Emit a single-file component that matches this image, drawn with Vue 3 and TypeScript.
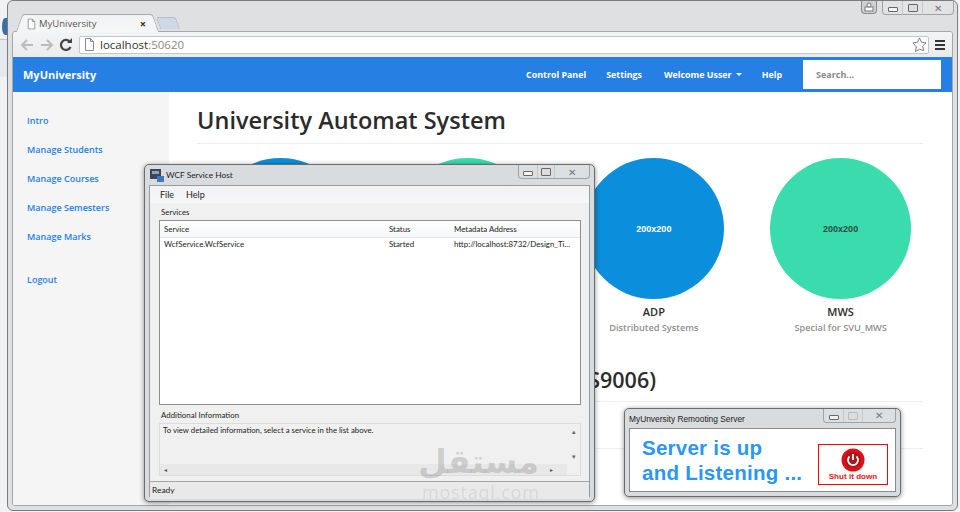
<script setup lang="ts">
const navItems = ['Intro', 'Manage Students', 'Manage Courses', 'Manage Semesters', 'Manage Marks']
const cards = [
  { title: '', sub: '', color: '#0b8edb', label: '' },
  { title: '', sub: '', color: '#3adbac', label: '' },
  { title: 'ADP', sub: 'Distributed Systems', color: '#0b8edb', label: '200x200', light: true },
  { title: 'MWS', sub: 'Special for SVU_MWS', color: '#3adbac', label: '200x200', light: false },
]
</script>

<template>
  <div class="desktop">
    <div class="globe"></div>
    <div class="edge-left"></div>
    <section class="browser">
      <div class="win-top">
        <div class="tab">
          <svg width="9" height="12" viewBox="0 0 11 13"><path d="M1.500.5h5l3 3v9h-8z M6.500.5v3h3" fill="#fff" stroke="#8a8a8a"/></svg>
          <span class="tab-title">MyUniversity</span>
          <span class="tab-x">×</span>
        </div>
        <div class="new-tab"></div>
        <div class="caption-lock"><svg width="12" height="10" viewBox="0 0 12 10"><rect x="2" y="5" width="8" height="4" fill="#fff" stroke="#777"/><circle cx="6" cy="3" r="2" fill="#fff" stroke="#777"/></svg></div>
        <div class="caption cap-browser">
          <span><i class="min"></i></span><span><i class="max"></i></span><span class="cx">✕</span>
        </div>
      </div>
      <div class="inner">
        <div class="toolbar">
          <svg class="nav-ic" width="16" height="14" viewBox="0 0 16 14"><path d="M14 7H3M8 2 3 7l5 5" fill="none" stroke="#bcbcbc" stroke-width="2"/></svg>
          <svg class="nav-ic" width="16" height="14" viewBox="0 0 16 14"><path d="M2 7h11M8 2l5 5-5 5" fill="none" stroke="#bcbcbc" stroke-width="2"/></svg>
          <svg class="nav-ic" width="14" height="14" viewBox="0 0 14 14"><path d="M11.500 9A5 5 0 1 1 11 4" fill="none" stroke="#444" stroke-width="2.200"/><path d="M8 5h5V0z" fill="#444"/></svg>
          <div class="omnibox">
            <svg width="11" height="13" viewBox="0 0 11 13"><path d="M1.500.5h5l3 3v9h-8z M6.500.5v3h3" fill="#fff" stroke="#8a8a8a"/></svg>
            <span class="url"><b>localhost</b>:50620</span>
            <svg class="star" width="15" height="15" viewBox="0 0 16 16"><path d="m8 1 2.100 4.600 4.900.6-3.600 3.400 1 4.900L8 13.100l-4.400 2.400 1-4.900L1 6.200l4.900-.6z" fill="#fff" stroke="#777"/></svg>
          </div>
          <div class="menu"><i></i><i></i><i></i></div>
        </div>
        <header class="navbar">
          <span class="brand">MyUniversity</span>
          <nav class="topnav">
            <a>Control Panel</a><a>Settings</a><a>Welcome Usser <i class="caret"></i></a><a>Help</a>
          </nav>
          <div class="search">Search...</div>
        </header>
        <div class="page">
          <aside class="sidebar">
            <a v-for="n in navItems" :key="n">{{ n }}</a>
            <a class="logout">Logout</a>
          </aside>
          <main class="main">
            <h1>University Automat System</h1>
            <div class="cards">
              <div v-for="(c, i) in cards" :key="i" class="card">
                <div class="circle" :style="{ background: c.color }">
                  <span :class="{ light: c.light }">{{ c.label }}</span>
                </div>
                <h4>{{ c.title }}</h4>
                <p>{{ c.sub }}</p>
              </div>
            </div>
            <h2>(S9006)</h2>
            <div class="rule2"></div>
            <div class="rule3"></div>
          </main>
        </div>
      </div>
    </section>

    <section class="wcf">
      <div class="titlebar">
        <svg width="14" height="13" viewBox="0 0 14 13"><rect x="0" y="0" width="11" height="10" fill="#3a4658"/><rect x="2" y="2" width="7" height="3" fill="#8fa4c0"/><rect x="7" y="7" width="7" height="6" fill="#3f78c0"/></svg>
        <span>WCF Service Host</span>
        <div class="caption cap-wcf">
          <span><i class="min"></i></span><span><i class="max"></i></span><span class="cx">✕</span>
        </div>
      </div>
      <div class="wcf-body">
        <div class="menubar"><span>File</span><span>Help</span></div>
        <div class="lbl services">Services</div>
        <div class="list">
          <div class="row head"><span class="c1">Service</span><span class="c2">Status</span><span class="c3">Metadata Address</span></div>
          <div class="row"><span class="c1">WcfService.WcfService</span><span class="c2">Started</span><span class="c3">http://localhost:8732/Design_Ti...</span></div>
        </div>
        <div class="lbl info">Additional Information</div>
        <div class="details">
          <div class="d-main">
            <div class="d-text">To view detailed information, select a service in the list above.</div>
            <div class="hbar"><i>◂</i><i>▸</i></div>
          </div>
          <div class="vbar"><i>▴</i><i>▾</i></div>
        </div>
        <div class="status">Ready</div>
      </div>
      <div class="watermark">
        <div class="wm-ar" lang="ar" dir="rtl">مستقل</div>
        <div class="wm-en">mostaql.com</div>
      </div>
    </section>

    <section class="remote">
      <div class="r-title">
        <span>MyUnversity Remooting Server</span>
        <div class="caption cap-remote">
          <span><i class="min"></i></span><span><i class="max dim"></i></span><span class="cx">✕</span>
        </div>
      </div>
      <div class="r-body">
        <div class="r-msg">Server is up<br />and Listening ...</div>
        <button class="shut">
          <svg width="24" height="24" viewBox="0 0 24 24"><circle cx="12" cy="12" r="11.500" fill="#e00e16"/><circle cx="12" cy="12" r="8" fill="#a61a1c"/><path d="M8.500 8.500a5 5 0 1 0 7 0" fill="none" stroke="#fff" stroke-width="1.800"/><path d="M12 6v6" stroke="#fff" stroke-width="1.800"/></svg>
          <span>Shut it down</span>
        </button>
      </div>
    </section>
  </div>
</template>

<style scoped>
.desktop { position: relative; width: 960px; height: 512px; overflow: hidden; background: #f1f2f4; font-family: "Noto Sans", sans-serif; }
.globe { position: absolute; left: 2px; top: 18px; width: 6px; height: 17px; background: #3a6ea5; border-radius: 50% 0 0 50%; }
.edge-left { position: absolute; left: 0; top: 39px; width: 8px; height: 37px; background: #e4e9f0; border-top: 1px solid #c3c3c3; }
.browser { position: absolute; left: 7px; top: 0; width: 951px; height: 511px; background: #dfe0e2; border: 1px solid #7c7c7c; border-radius: 6px; padding: 0 4px 4px; box-sizing: border-box; display: flex; flex-direction: column; }
.win-top { height: 30px; flex: none; display: flex; align-items: flex-end; position: relative; padding-left: 13px; }
.tab { position: relative; z-index: 1; width: 125px; height: 18px; margin-bottom: -1px; background: linear-gradient(#f1f2f3, #f6f7f7); border-top: 1px solid #a8a9ab; border-radius: 4px 4px 0 0; display: flex; align-items: center; gap: 3px; padding: 0 4px 0 2px; box-sizing: border-box; font-size: 9.500px; color: #555; }
.tab::before, .tab::after { content: ""; position: absolute; top: -1px; bottom: 0; width: 12px; background: #f3f4f5; border-top: 1px solid #a8a9ab; }
.tab::before { left: -6px; transform: skewX(-20deg); border-left: 1px solid #a8a9ab; border-radius: 3px 0 0 0; z-index: -1; }
.tab::after { right: -6px; transform: skewX(20deg); border-right: 1px solid #a8a9ab; border-radius: 0 3px 0 0; z-index: -1; }
.tab-title { flex: 1; font-family: "Open Sans", sans-serif; font-size: 9.500px; }
.tab-x { font-weight: 700; font-size: 11px; color: #333; }
.new-tab { width: 18px; height: 11px; margin: 0 0 2px 8px; background: #cfd8e6; border: 1px solid #b9bcc2; border-bottom: 0; border-radius: 3px 3px 0 0; transform: skewX(20deg); }
.caption-lock { position: absolute; left: 849px; top: 0; width: 16px; height: 13px; background: #cfd0d2; border: 1px solid #8a8a8a; border-top: 0; border-radius: 0 0 4px 4px; display: flex; align-items: center; justify-content: center; box-sizing: border-box; }
.caption { position: absolute; display: grid; top: 0; height: 14px; background: #e2e3e5; border: 1px solid #a2a2a2; border-top: 0; border-radius: 0 0 4px 4px; box-sizing: border-box; }
.cap-browser { left: 870px; width: 72px; grid-template-columns: 20px 20px 1fr; }
.cap-wcf { left: 369px; width: 72px; grid-template-columns: 19px 17px 1fr; background: #dcdfe2; }
.cap-remote { left: 194px; width: 73px; grid-template-columns: 20px 19px 1fr; background: #dcdfe2; }
.caption > span { display: flex; align-items: center; justify-content: center; border-right: 1px solid #c6c7c9; font-size: 10px; color: #777; }
.caption > .cx { border-right: 0; }
.min { display: block; width: 8px; height: 3px; border: 1px solid #666; background: #f3f3f3; border-radius: 1px; margin-top: 3px; }
.max { display: block; width: 8px; height: 6px; border: 1px solid #666; background: #ddd; border-radius: 1px; }
.max.dim { border-color: #bbb; }
.inner { flex: 1; min-height: 0; display: flex; flex-direction: column; border: 1px solid #a6a7a9; border-radius: 3px; overflow: hidden; }
.toolbar { height: 25px; flex: none; background: linear-gradient(#f3f4f5, #ebebec); display: flex; align-items: center; gap: 4px; padding-left: 6px; box-sizing: border-box; }
.nav-ic { flex: none; }
.omnibox { margin-left: 2px; width: 850px; height: 18px; background: #fff; border: 1px solid #c4c5c7; border-radius: 2px; display: flex; align-items: center; gap: 5px; padding: 0 1px 0 4px; box-sizing: border-box; }
.url { flex: 1; font-family: "Open Sans", sans-serif; font-size: 11.500px; color: #888; }
.url b { font-weight: 400; color: #333; }
.menu { width: 10px; margin-left: 2px; display: flex; flex-direction: column; gap: 2px; }
.menu i { display: block; height: 2px; background: #333; }
.navbar { height: 35px; flex: none; background: #267fe3; display: flex; align-items: center; color: #fff; font-family: "Open Sans", sans-serif; font-weight: 700; }
.brand { margin-left: 10px; font-size: 11px; }
.topnav { margin-left: auto; display: flex; gap: 20px; font-size: 8.900px; }
.topnav a { display: flex; align-items: center; gap: 4px; }
.topnav a:nth-child(3) { margin-left: 2px; }
.caret { width: 0; height: 0; border: 3px solid transparent; border-top-color: #fff; border-bottom: 0; }
.search { width: 138px; height: 29px; margin: 0 11px 0 21px; background: #fff; color: #888; font-size: 9px; display: flex; align-items: center; padding-left: 13px; box-sizing: border-box; }
.page { flex: 1; display: flex; min-height: 0; background: #fff; }
.sidebar { width: 156px; flex: none; background: #f5f5f5; box-sizing: border-box; padding: 23px 0 0 14px; display: flex; flex-direction: column; font-family: "Open Sans", sans-serif; font-weight: 600; font-size: 9px; color: #267fe3; }
.sidebar a { height: 29px; line-height: 12px; flex: none; }
.sidebar .logout { margin-top: 14px; }
.main { flex: 1; padding: 0 29px 0 28px; min-width: 0; }
h1 { margin: 0; height: 51px; line-height: 56px; font-family: "Open Sans", sans-serif; font-weight: 600; font-size: 23.500px; color: #2b2b2b; border-bottom: 1px solid #eee; }
.cards { display: grid; grid-template-columns: repeat(4, 1fr); margin: 14px -11px 0 -10px; }
.card { text-align: center; display: flex; flex-direction: column; align-items: center; }
.circle { width: 141px; height: 141px; border-radius: 50%; display: flex; align-items: center; justify-content: center; font-size: 9px; font-weight: 700; font-family: "Liberation Sans", sans-serif; color: #2b4a44; }
.circle .light { color: #fff; }
.card h4 { margin: 6px 0 0; height: 14px; line-height: 14px; font-size: 11px; font-weight: 600; color: #2b2b2b; font-family: "Open Sans", sans-serif; }
.card p { margin: 3px 0 0; height: 12px; line-height: 12px; font-size: 9.200px; font-weight: 600; color: #8f8f8f; font-family: "Open Sans", sans-serif; }
h2 { margin: 32px 0 0; font-family: "Open Sans", sans-serif; font-size: 21.500px; font-weight: 600; line-height: 28px; color: #2b2b2b; text-align: right; padding-right: 267px; }
.rule2 { height: 1px; background: #eee; margin-top: 7px; }
.rule3 { height: 1px; background: #eee; margin-top: 46px; }

.wcf { position: absolute; left: 144px; top: 164px; width: 451px; height: 338px; box-sizing: border-box; background: #d9dcdf; border: 1px solid #6c6c6c; border-radius: 5px; box-shadow: 0 1px 5px rgba(0,0,0,.45); padding: 0 4px 4px; display: flex; flex-direction: column; font-family: Lato, sans-serif; color: #222; }
.titlebar { height: 20px; flex: none; display: flex; align-items: center; gap: 2px; padding-left: 1px; font-size: 8.300px; position: relative; }
.wcf-body { flex: 1; background: #f0f0f0; border: 1px solid #9a9a9a; display: flex; flex-direction: column; min-height: 0; font-size: 7.900px; }
.menubar { height: 17px; flex: none; display: flex; gap: 12px; align-items: center; padding-left: 10px; background: linear-gradient(#f1f2f4, #f7f7f8); font-size: 9px; }
.lbl { padding-left: 11px; height: 12px; line-height: 12px; flex: none; }
.services { margin-top: 3px; }
.list { margin: 2px 8px 0 9px; height: 185px; flex: none; background: #fff; border: 1px solid #8f8f8f; box-sizing: border-box; }
.row { display: flex; height: 12px; align-items: center; padding-left: 4px; }
.row.head { height: 17px; box-sizing: border-box; background: linear-gradient(#fff, #f6f7f8); border-bottom: 1px solid #e4e5e7; }
.c1 { width: 225px; flex: none; }
.c2 { width: 65px; flex: none; }
.c3 { flex: 1; min-width: 0; white-space: nowrap; }
.info { margin-top: 4px; }
.details { margin: 2px 8px 0 9px; height: 53px; flex: none; display: flex; border: 1px solid #dcdcdc; background: #f0f0f0; box-sizing: border-box; }
.d-main { flex: 1; display: flex; flex-direction: column; }
.d-text { flex: 1; padding: 1px 3px; font-size: 7.800px; line-height: 11px; }
.hbar { height: 11px; background: #e8e8e8; display: flex; justify-content: space-between; align-items: center; padding: 0 14px 0 4px; font-size: 6px; color: #555; }
.hbar i, .vbar i { font-style: normal; }
.vbar { width: 13px; background: #f0f0f0; display: flex; flex-direction: column; justify-content: space-between; align-items: center; padding: 3px 0 14px; font-size: 7px; color: #666; }
.status { margin-top: 5px; flex: 1; border-top: 1px solid #a6a6a6; background: #e9e9e9; padding-left: 2px; font-size: 8.400px; line-height: 17px; }
.watermark { position: absolute; left: 278px; top: 280px; width: 116px; text-align: center; pointer-events: none; }
.wm-ar { font-family: "DejaVu Sans", sans-serif; font-weight: 700; font-size: 33px; line-height: 33px; height: 33px; color: rgba(120,120,120,.28); }
.wm-en { font-family: "Open Sans", sans-serif; font-size: 18px; line-height: 15px; letter-spacing: .8px; margin: 7px 0 0 -1px; color: rgba(120,120,120,.16); white-space: nowrap; }

.remote { position: absolute; left: 624px; top: 408px; width: 277px; height: 89px; box-sizing: border-box; background: #d9dcdf; border: 1px solid #6c6c6c; border-radius: 5px; box-shadow: 0 1px 5px rgba(0,0,0,.45); padding: 0 4px 4px; display: flex; flex-direction: column; font-family: "Liberation Sans", sans-serif; }
.r-title { height: 19px; flex: none; display: flex; align-items: center; font-size: 8.400px; color: #222; position: relative; }
.r-body { flex: 1; background: #fff; border: 1px solid #8a8a8a; display: flex; align-items: center; justify-content: space-between; padding: 0 7px 0 12px; min-height: 0; }
.r-msg { color: #2b96f3; font-weight: 700; font-size: 20.500px; line-height: 25px; letter-spacing: .25px; white-space: nowrap; }
.shut { width: 70px; height: 41px; margin: 8px 0 0; padding: 3px 0 0; box-sizing: border-box; background: #fff; border: 1.500px solid #f00; display: flex; flex-direction: column; align-items: center; font-family: "Liberation Sans", sans-serif; font-size: 8.100px; font-weight: 700; color: #ee1111; }
</style>
